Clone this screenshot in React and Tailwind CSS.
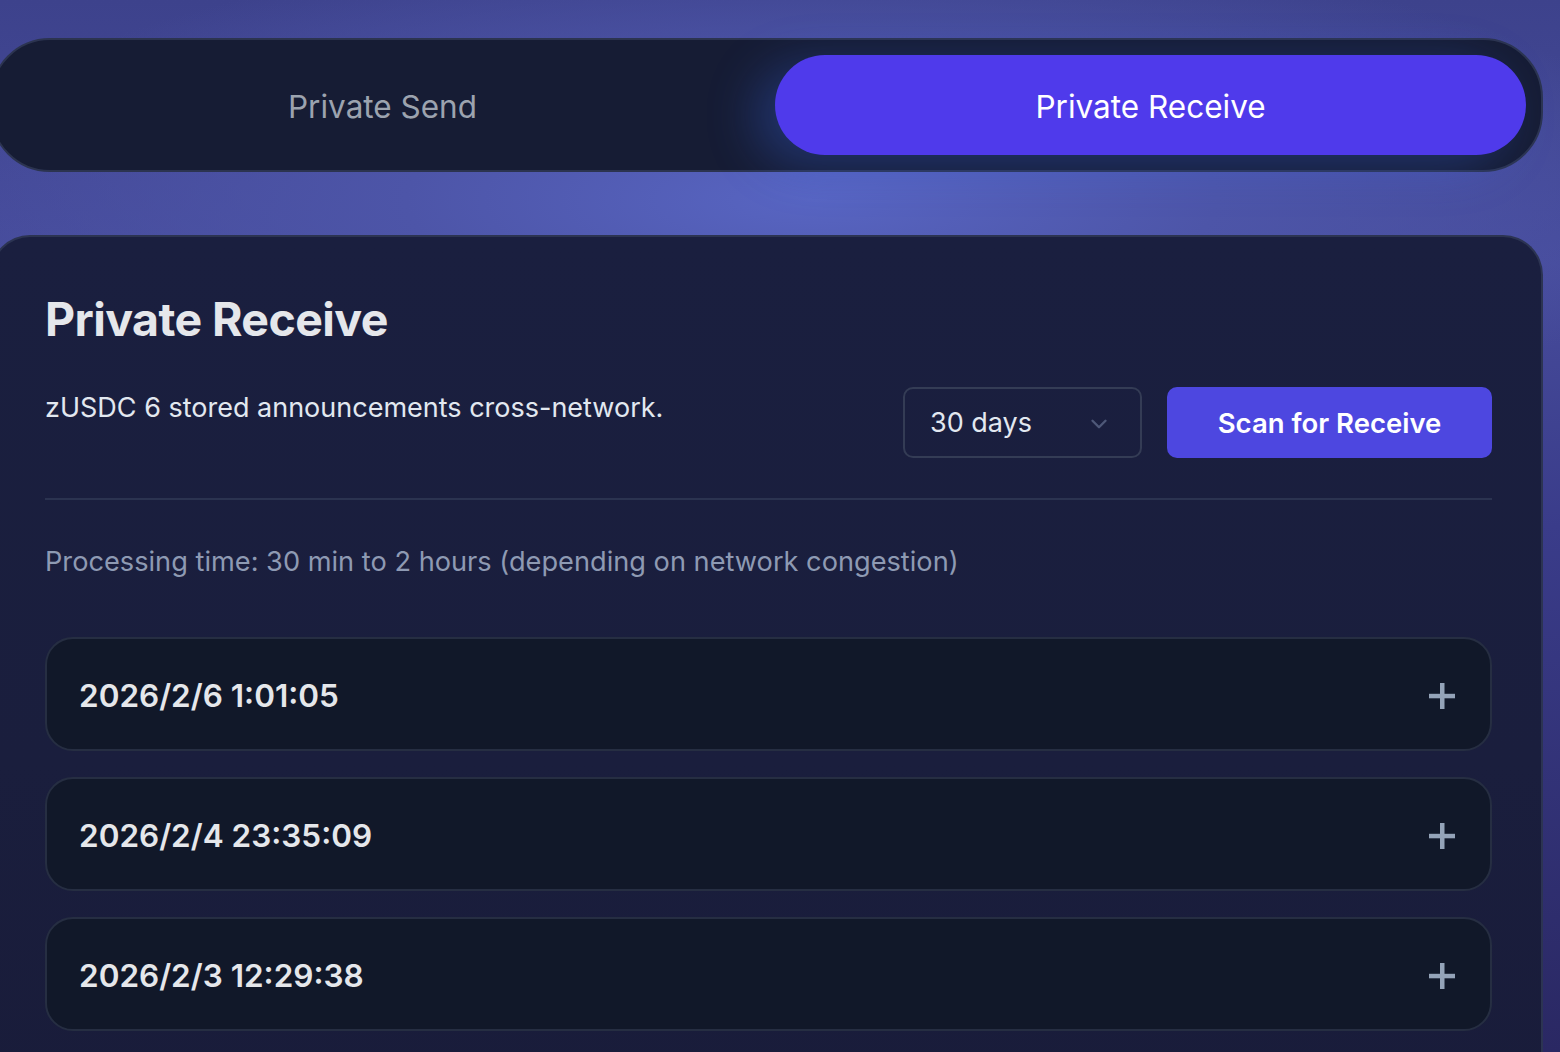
import React, { useState } from "react";
import { ChevronDown } from "lucide-react";

const font = { fontFamily: "Inter, 'Noto Sans', 'Liberation Sans', sans-serif" };

function PlusIcon() {
  return (
    <svg width="28" height="28" viewBox="0 0 28 28" className="shrink-0">
      <rect x="12" y="1" width="4.5" height="26" fill="#94a3b8" />
      <rect x="1" y="11.8" width="26" height="4.5" fill="#94a3b8" />
    </svg>
  );
}

export default function App() {
  const [tab, setTab] = useState("receive");
  const [open, setOpen] = useState(null);

  const records = ["2026/2/6 1:01:05", "2026/2/4 23:35:09", "2026/2/3 12:29:38"];

  return (
    <div
      style={font}
      className="w-[1560px] h-[1052px] overflow-hidden bg-[radial-gradient(ellipse_900px_260px_at_52%_200px,#5865c2_0%,#4d55a8_45%,rgba(60,62,140,0)_100%),linear-gradient(180deg,#3d428c_0%,#474c9c_25%,#3a3c8a_50%,#2a2863_100%)]"
    >
      <div className="ml-[-10px] w-[1553px] pt-[38px]">
        {/* TABS */}
        <div className="flex gap-[17px] h-[134px] p-[15px] rounded-[60px] border-2 border-[#2c3450] bg-[#161c34]">
          <button
            onClick={() => setTab("send")}
            className={`flex-1 rounded-full text-[31.5px] pt-[3px] ${tab === "send" ? "bg-[#4f3aeb] text-white shadow-[0_0_50px_rgba(59,110,246,0.3)]" : "text-[#9ca3af]"}`}
          >
            Private Send
          </button>
          <button
            onClick={() => setTab("receive")}
            className={`flex-1 rounded-full text-[31.5px] pt-[3px] ${tab === "receive" ? "bg-[#4f3aeb] text-white shadow-[-20px_10px_50px_rgba(59,110,246,0.3)]" : "text-[#9ca3af]"}`}
          >
            Private Receive
          </button>
        </div>

        {/* CARD */}
        <div className="mt-[63px] rounded-t-[40px] border-2 border-b-0 border-[#2c3452] bg-[linear-gradient(180deg,#1a1f3f_0%,#1a1e3d_60%,#191c3a_100%)] pt-[54px] pl-[53px] pr-[49px] pb-[80px]">
          <h1 className="text-[46.5px] leading-[56px] font-bold tracking-[-0.6px] text-[#e5e7eb]">Private Receive</h1>

          <div className="mt-[40px] flex items-start justify-between">
            <p className="text-[27px] leading-[36px] text-[#e2e8f0] pt-[3px]">zUSDC 6 stored announcements cross-network.</p>
            <div className="flex gap-[25px]">
              <div className="w-[239px] h-[71px] rounded-[10px] border-2 border-[#343c55] flex items-center justify-between pl-[25px] pr-[28px] pt-[2px]">
                <span className="text-[27px] text-[#e2e8f0]">30 days</span>
                <ChevronDown size={26} strokeWidth={2.2} className="text-[#4e5878]" />
              </div>
              <button className="w-[325px] h-[71px] rounded-[10px] bg-[#4d47e0] text-white text-[27.5px] font-semibold pt-[3px]">
                Scan for Receive
              </button>
            </div>
          </div>

          <div className="mt-[40px] h-[2px] bg-[#2b3350]" />

          <p className="mt-[44px] text-[27.2px] leading-[36px] text-[#8e9ab3]">
            Processing time: 30 min to 2 hours (depending on network congestion)
          </p>

          <div className="mt-[57px] flex flex-col gap-[26px]">
            {records.map((r, i) => (
              <div
                key={r}
                onClick={() => setOpen(open === i ? null : i)}
                className="h-[114px] rounded-[28px] border-2 border-[#262e42] bg-[#111829] flex items-center justify-between pl-[32px] pr-[34px] pt-[4px] cursor-pointer"
              >
                <span className="text-[31.5px] font-semibold text-[#e5e7eb]">{r}</span>
                <PlusIcon />
              </div>
            ))}
          </div>
        </div>
      </div>
    </div>
  );
}
